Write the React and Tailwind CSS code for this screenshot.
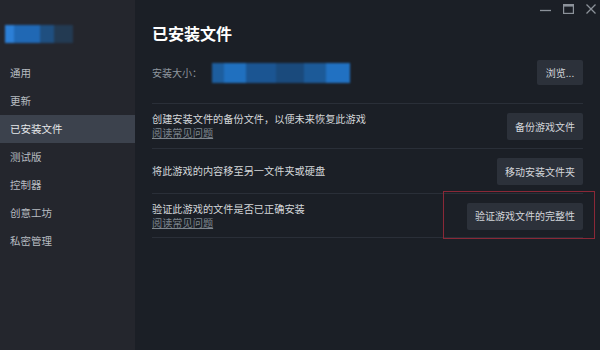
import React from "react";

const navItems = ["通用", "更新", "已安装文件", "测试版", "控制器", "创意工坊", "私密管理"];

const rows = [
  { text: "创建安装文件的备份文件，以便未来恢复此游戏", faq: true, button: "备份游戏文件" },
  { text: "将此游戏的内容移至另一文件夹或硬盘", faq: false, button: "移动安装文件夹" },
  { text: "验证此游戏的文件是否已正确安装", faq: true, button: "验证游戏文件的完整性", marked: true },
];

const Button = ({ children, className = "" }) => (
  <button className={"bg-[#2c313a] text-[#d3d6da] text-[10px] leading-none px-[8px] rounded-[2px] " + className}>
    {children}
  </button>
);

const WindowControls = () => (
  <div className="h-[18px] flex items-center justify-end gap-[12px] pr-[4px]">
    <svg width="11" height="11" viewBox="0 0 11 11">
      <path d="M0 6.5h11" stroke="#8c929a" strokeWidth="1.3" />
    </svg>
    <svg width="11" height="10" viewBox="0 0 11 10">
      <rect x="0.6" y="0.6" width="9.8" height="8.8" fill="none" stroke="#8c929a" strokeWidth="1.2" />
      <path d="M0.6 1.8h9.8" stroke="#8c929a" strokeWidth="1.6" />
    </svg>
    <svg width="10" height="10" viewBox="0 0 10 10">
      <path d="M0.5 0.5l9 9M9.5 0.5l-9 9" stroke="#8c929a" strokeWidth="1.3" />
    </svg>
  </div>
);

const Sidebar = () => (
  <div className="w-[135px] shrink-0 bg-[#24262d] flex flex-col">
    <div className="mt-[25px] ml-[5px] h-[18px] w-[68px] flex blur-[0.8px]">
      <div className="w-[9px] bg-[#2c7fd6]" />
      <div className="w-[26px] bg-[#2068b4]" />
      <div className="w-[14px] bg-[#1f4f80]" />
      <div className="w-[19px] bg-[#233a52]" />
    </div>
    <div className="mt-[16px] flex flex-col">
      {navItems.map((item) => (
        <div
          key={item}
          className={
            "h-[28px] flex items-center pl-[10px] text-[10.5px] " +
            (item === "已安装文件" ? "bg-[#3c424d] text-[#e6e8ea]" : "text-[#b6bbc0]")
          }
        >
          {item}
        </div>
      ))}
    </div>
  </div>
);

const App = () => {
  return (
    <div
      className="w-[600px] h-[350px] flex overflow-hidden"
      style={{ fontFamily: '"Noto Sans CJK SC", "Noto Sans", sans-serif' }}
    >
      <Sidebar />
      <div className="flex-1 bg-[#1b1f26] flex flex-col">
        <WindowControls />
        <div className="pl-[17px] pr-[17px] flex flex-col">
          <h1 className="mt-[5px] text-[16px] leading-[20px] font-bold text-white">已安装文件</h1>

          <div className="mt-[17px] h-[25px] flex items-center">
            <span className="text-[10px] text-[#8e969e]">安装大小：</span>
            <div className="ml-[10px] h-[20px] w-[138px] flex blur-[1px]">
              <div className="w-[12px] bg-[#1d5e9e]" />
              <div className="w-[22px] bg-[#2070bf]" />
              <div className="w-[30px] bg-[#1b5592]" />
              <div className="w-[28px] bg-[#1a4a7c]" />
              <div className="w-[22px] bg-[#1c5a98]" />
              <div className="w-[24px] bg-[#2171c2]" />
            </div>
            <Button className="ml-auto h-[25px] w-[46px] px-0">浏览...</Button>
          </div>

          <div className="mt-[18px] flex flex-col">
            {rows.map((row, i) => (
              <div
                key={row.button}
                className={
                  "h-[45px] flex items-center justify-between border-t border-[#2a2f38] " +
                  (i === rows.length - 1 ? "border-b" : "")
                }
              >
                <div className="flex flex-col">
                  <span className="text-[10.2px] leading-[14px] text-[#d4d7da]">{row.text}</span>
                  {row.faq && (
                    <span className="text-[10.2px] leading-[14px] text-[#7d858d] underline">阅读常见问题</span>
                  )}
                </div>
                <div className="relative">
                  <Button className="h-[27px]">{row.button}</Button>
                  {row.marked && (
                    <div className="absolute -left-[24px] -right-[12px] -top-[10px] -bottom-[9px] border border-[#8a2837]" />
                  )}
                </div>
              </div>
            ))}
          </div>
        </div>
      </div>
    </div>
  );
};

export default App;
